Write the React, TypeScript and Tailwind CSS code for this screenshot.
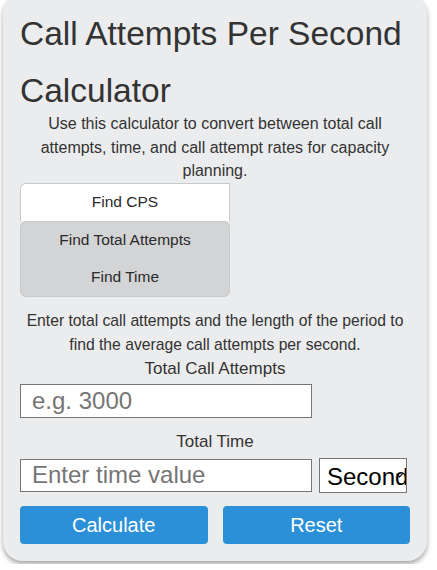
import React, { useState } from 'react';

const App = () => {
  const [mode, setMode] = useState('cps');
  const [attempts, setAttempts] = useState('');
  const [time, setTime] = useState('');
  const [unit, setUnit] = useState('seconds');

  const tabs = [
    { id: 'cps', label: 'Find CPS' },
    { id: 'total', label: 'Find Total Attempts' },
    { id: 'time', label: 'Find Time' },
  ];

  return (
    <div className="min-h-screen bg-white" style={{ fontFamily: '"Liberation Sans", Arial, sans-serif' }}>
      <div className="mx-[3px] mt-[-6px] w-[424px] rounded-[20px] bg-[#ebeced] px-[17px] pt-[11px] pb-[17px] text-[#333] shadow-[0_3px_5px_rgba(0,0,0,0.35)]">
        <h1 className="mb-[-7px] text-[33.5px] leading-[57px] font-normal">Call Attempts Per Second Calculator</h1>

        <p className="px-[8px] text-center text-[16px] leading-[23.5px]">
          Use this calculator to convert between total call attempts, time, and call attempt rates for capacity planning.
        </p>

        <div className="flex w-[210px] flex-col">
          {tabs.map((t, i) =>
            i === 0 ? (
              <button
                key={t.id}
                onClick={() => setMode(t.id)}
                className="h-[38px] rounded-tl-[6px] border border-b-0 border-[#c9c9c9] bg-white text-[15.5px] text-[#2a2a2a]"
              >
                {t.label}
              </button>
            ) : null
          )}
          <div className="flex flex-col rounded-[6px] border border-[#c9c9c9] bg-[#d3d4d6]">
            {tabs.slice(1).map((t) => (
              <button
                key={t.id}
                onClick={() => setMode(t.id)}
                className="h-[37px] text-[15.5px] text-[#2a2a2a]"
              >
                {t.label}
              </button>
            ))}
          </div>
        </div>

        <p className="mt-[12px] text-center text-[15.7px] leading-[24px]">
          Enter total call attempts and the length of the period to find the average call attempts per second.
        </p>

        <div className="text-center text-[17px] leading-[24px]">Total Call Attempts</div>
        <input
          type="number"
          value={attempts}
          onChange={(e) => setAttempts(e.target.value)}
          placeholder="e.g. 3000"
          className="mt-[3px] block h-[34px] w-[292px] border border-[#767676] bg-white px-[11px] text-[24px] text-black placeholder:text-[#757575]"
        />

        <div className="mt-[12px] text-center text-[17px] leading-[24px]">Total Time</div>
        <div className="mt-[4px] flex items-center gap-[7px]">
          <input
            type="number"
            value={time}
            onChange={(e) => setTime(e.target.value)}
            placeholder="Enter time value"
            className="block h-[33px] w-[292px] border border-[#767676] bg-white px-[11px] text-[24px] text-black placeholder:text-[#757575]"
          />
          <div className="relative">
            <select
              value={unit}
              onChange={(e) => setUnit(e.target.value)}
              className="block h-[35px] w-[88px] appearance-none border border-[#767676] bg-white pr-0 pl-[7px] text-[24px] text-black"
            >
              <option value="seconds">Seconds</option>
              <option value="minutes">Minutes</option>
              <option value="hours">Hours</option>
            </select>
            <svg
              className="pointer-events-none absolute top-[15px] right-[4px]"
              width="7"
              height="5"
              viewBox="0 0 7 5"
            >
              <path d="M0.5 0.8 L3.5 3.8 L6.5 0.8" fill="none" stroke="#000" strokeWidth="1.2" />
            </svg>
          </div>
        </div>

        <div className="mt-[13px] flex gap-[15px]">
          <button className="h-[38px] flex-1 rounded-[4px] bg-[#2c90d8] text-[20px] text-white">Calculate</button>
          <button
            onClick={() => {
              setAttempts('');
              setTime('');
            }}
            className="h-[38px] flex-1 rounded-[4px] bg-[#2c90d8] text-[20px] text-white"
          >
            Reset
          </button>
        </div>
      </div>
    </div>
  );
};

export default App;
